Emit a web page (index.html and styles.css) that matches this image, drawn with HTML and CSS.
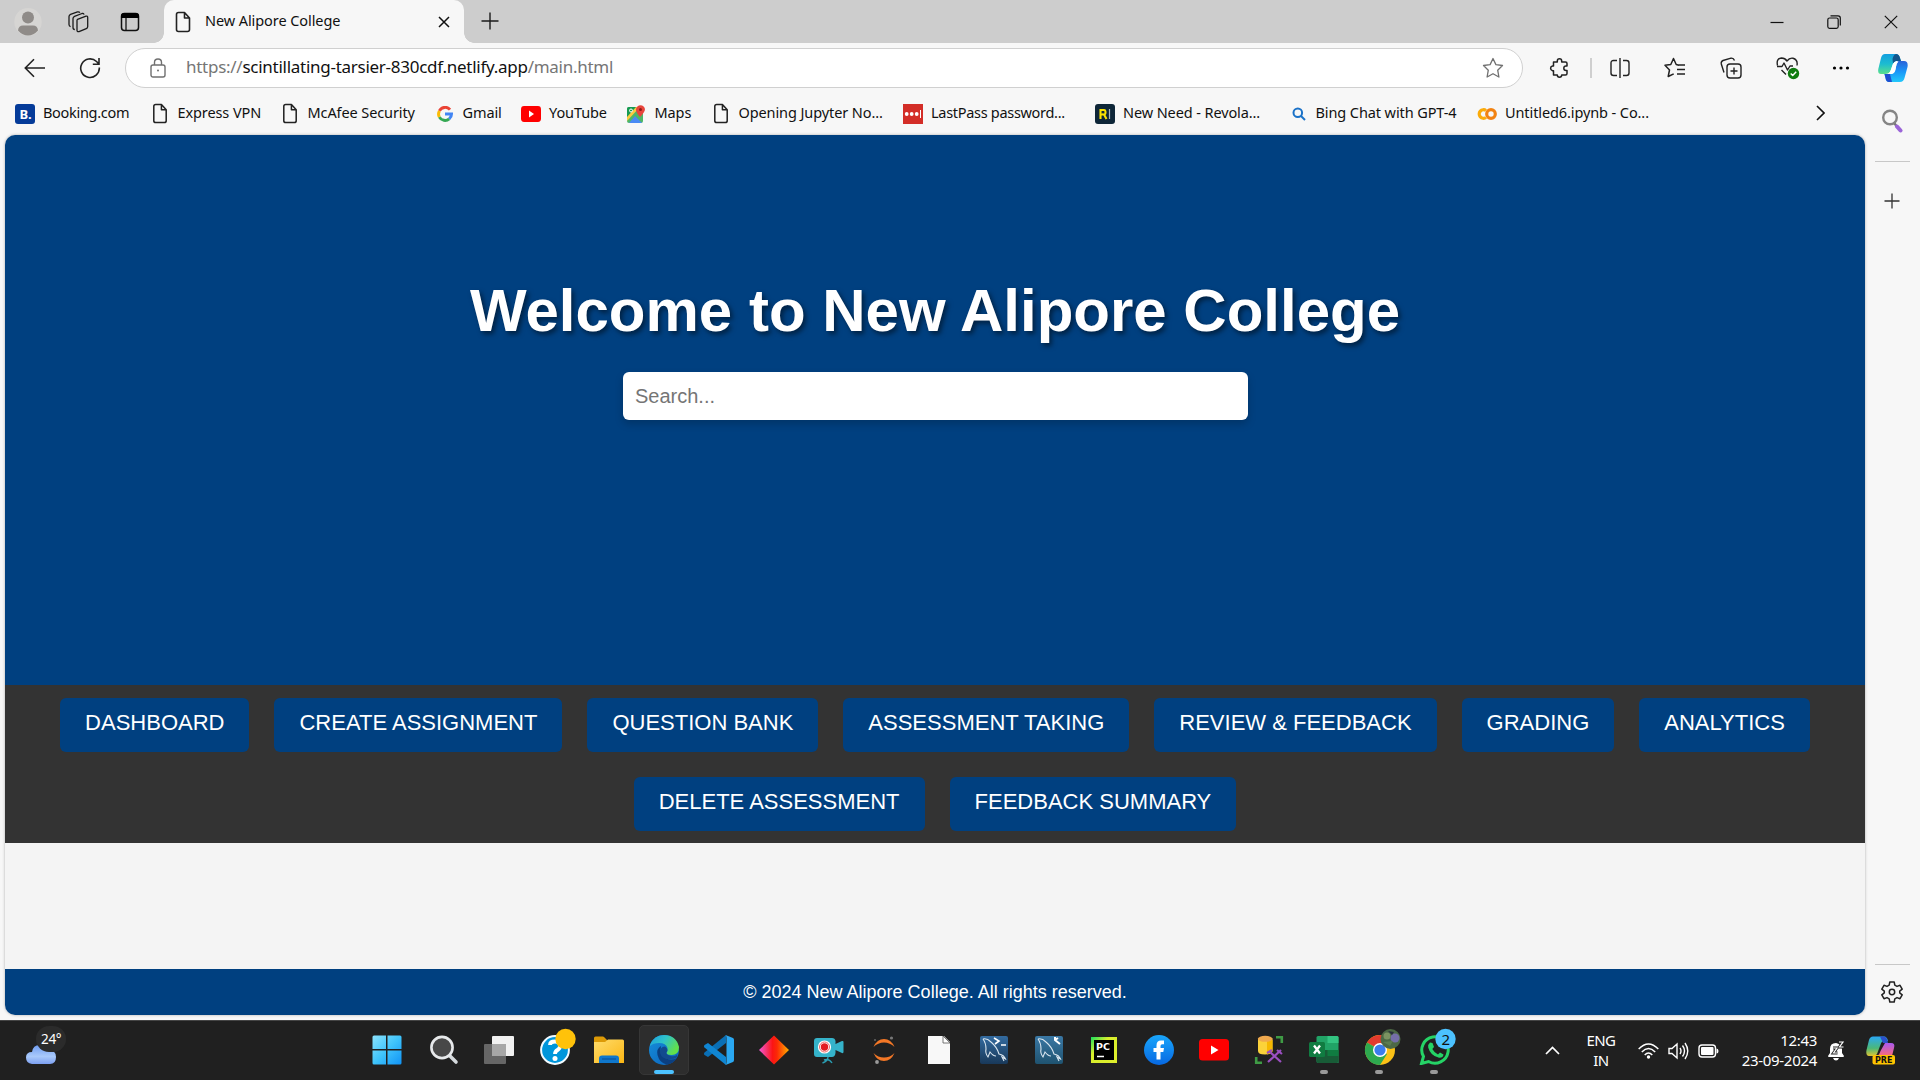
FILE: index.html
```html
<!DOCTYPE html>
<html lang="en">
<head>
<meta charset="utf-8">
<title>New Alipore College</title>
<link rel="stylesheet" href="styles.css">
</head>
<body>
<svg width="0" height="0" class="defs" aria-hidden="true">
  <defs>
    <symbol id="page" viewBox="0 0 16 22"><path d="M3.5 1.5H9.5L14.5 7V18.500Q14.500 20.500 12.500 20.500H3.500Q1.500 20.500 1.500 18.500V3.500Q1.500 1.500 3.500 1.500ZM9.500 1.500V7H14.500" fill="none" stroke="#222" stroke-width="1.600" stroke-linejoin="round"/></symbol>
    <linearGradient id="gWin" x1="0" y1="0" x2="1" y2="1"><stop offset="0" stop-color="#8be3fd"/><stop offset=".5" stop-color="#3fc4fb"/><stop offset="1" stop-color="#1193f5"/></linearGradient>
    <linearGradient id="gFold" x1="0" y1="0" x2="1" y2="1"><stop offset="0" stop-color="#ffdc6b"/><stop offset="1" stop-color="#fbb614"/></linearGradient>
    <linearGradient id="gEdgeTop" x1="0" y1="0" x2="1" y2=".5"><stop offset="0" stop-color="#1b9de0"/><stop offset=".5" stop-color="#2fc3c8"/><stop offset="1" stop-color="#62e04a"/></linearGradient>
    <linearGradient id="gEdgeMid" x1="0" y1="0" x2="1" y2="1"><stop offset="0" stop-color="#1690dc"/><stop offset="1" stop-color="#0b5fb8"/></linearGradient>
    <linearGradient id="gDia" x1="0" x2="1"><stop offset="0" stop-color="#f05ad8"/><stop offset=".45" stop-color="#fb1515"/><stop offset=".6" stop-color="#fb2a05"/><stop offset="1" stop-color="#ffb000"/></linearGradient>
    <linearGradient id="gSql" x1="0" y1="0" x2="0" y2="1"><stop offset="0" stop-color="#336ba0"/><stop offset="1" stop-color="#19395a"/></linearGradient>
    <linearGradient id="gSql2" x1="0" y1="0" x2="0" y2="1"><stop offset="0" stop-color="#3a78a5"/><stop offset="1" stop-color="#1f5370"/></linearGradient>
    <linearGradient id="gPc" x1="0" y1="0" x2="1" y2="1"><stop offset="0" stop-color="#16e05f"/><stop offset=".35" stop-color="#d7ee2c"/><stop offset="1" stop-color="#dfee2c"/></linearGradient>
    <linearGradient id="gFb" x1="0" y1="0" x2="0" y2="1"><stop offset="0" stop-color="#19a6fb"/><stop offset="1" stop-color="#0768e2"/></linearGradient>
    <linearGradient id="gCloud" x1="0" y1="0" x2="0" y2="1"><stop offset="0" stop-color="#6f9cf0"/><stop offset=".6" stop-color="#a9c9fb"/><stop offset="1" stop-color="#7c9ff0"/></linearGradient>
    <linearGradient id="gCopA" x1="0" y1="0" x2="0" y2="1"><stop offset="0" stop-color="#139fe0"/><stop offset=".5" stop-color="#1dbcd0"/><stop offset="1" stop-color="#5be08b"/></linearGradient>
    <linearGradient id="gCopB" x1="0" y1="0" x2="0" y2="1"><stop offset="0" stop-color="#2a62d8"/><stop offset=".5" stop-color="#1a96f8"/><stop offset="1" stop-color="#23c8fa"/></linearGradient>
    <linearGradient id="gPreA" x1="0" y1="0" x2="0" y2="1"><stop offset="0" stop-color="#2aa9f5"/><stop offset=".6" stop-color="#4bb878"/><stop offset="1" stop-color="#e0c432"/></linearGradient>
    <linearGradient id="gPreB" x1="0" y1="0" x2="0" y2="1"><stop offset="0" stop-color="#a95af0"/><stop offset="1" stop-color="#fb6b78"/></linearGradient>
  </defs>
</svg>

<header class="tabstrip">
  <div class="tabstrip-tools">
    <svg width="28" height="34" viewBox="0 0 28 34"><ellipse cx="14" cy="17" rx="13.700" ry="14" fill="#d6d5d3"/><circle cx="14" cy="12.500" r="6" fill="#8f8b88"/><path d="M4 25.500Q4.500 20.500 9 20.500H19Q23.500 20.500 24 25.500Q19.500 30.500 14 30.500T4 25.500Z" fill="#8f8b88"/></svg>
    <svg width="22" height="22" viewBox="0 0 22 22" fill="none" stroke="#1b1b1b" stroke-width="1.300" stroke-linejoin="round"><path d="M10.500 8.300L19 5.200Q20.700 4.800 20.700 6.500V15.500Q20.700 17 19.300 17.600L12 20.600Q10 21 10 19.200V9.500Q10 8.500 10.500 8.300Z"/><path d="M7.800 18.500Q6 18.500 6 16.500V7.500Q6 6 7.500 5.300L15 2.500Q16.800 2 17 3.700"/><path d="M3.600 15.600Q2 15.300 2 13.500V5.500Q2 4 3.500 3.300L10.500.9Q12.300.5 12.800 1.800"/></svg>
    <svg width="20" height="20" viewBox="0 0 20 20"><rect x="1.500" y="1.500" width="17" height="17" rx="3" fill="none" stroke="#111" stroke-width="1.500"/><path d="M1 6V4Q1 1 4 1H16Q19 1 19 4V6Z" fill="#000"/><path d="M6 6V18" stroke="#111" stroke-width="1.300"/></svg>
  </div>
  <div class="tab">
    <svg width="16" height="22"><use href="#page"/></svg>
    <span class="tab-title">New Alipore College</span>
    <svg width="12" height="12" viewBox="0 0 12 12"><path d="M1 1L11 11M11 1L1 11" stroke="#111" stroke-width="1.500"/></svg>
  </div>
  <svg class="newtab" width="18" height="18" viewBox="0 0 18 18"><path d="M9 .5V17.500M.5 9H17.500" stroke="#1b1b1b" stroke-width="1.400"/></svg>
  <div class="window-buttons">
    <svg width="14" height="14" viewBox="0 0 14 14"><path d="M.5 7.500H13.500" stroke="#111" stroke-width="1.200"/></svg>
    <svg width="14" height="14" viewBox="0 0 14 14" fill="none" stroke="#111" stroke-width="1.200"><rect x=".8" y="3" width="10.400" height="10.400" rx="1.800"/><path d="M3.500.8H11Q13.300.8 13.300 3V10.500"/></svg>
    <svg width="14" height="14" viewBox="0 0 14 14"><path d="M.8.8L13.200 13.200M13.200.8L.8 13.200" stroke="#111" stroke-width="1.200"/></svg>
  </div>
</header>

<div class="toolbar">
  <svg class="back" width="22" height="20" viewBox="0 0 22 20" fill="none" stroke="#222" stroke-width="1.600"><path d="M21 10H1.500M10 1.200L1.300 10L10 18.800"/></svg>
  <svg class="reload" width="22" height="22" viewBox="0 0 22 22" fill="none" stroke="#222" stroke-width="1.600"><path d="M20.300 10.500A9.300 9.300 0 1 1 17.500 4.500L20 7M20 1V7.300H13.800"/></svg>
  <div class="address">
    <svg width="16" height="20" viewBox="0 0 16 20" fill="none" stroke="#707070" stroke-width="1.400"><rect x="1" y="7" width="14" height="12" rx="2"/><path d="M4.500 7V4.500Q4.500 1 8 1T11.500 4.500V7"/><circle cx="8" cy="12.500" r="1" fill="#707070" stroke="none"/></svg>
    <span class="url">https://<b>scintillating-tarsier-830cdf.netlify.app</b>/main.html</span>
    <svg width="22" height="22" viewBox="0 0 22 22"><path d="M11 1.500L13.900 7.600L20.500 8.500L15.700 13.200L16.900 20L11 16.700L5.100 20L6.300 13.200L1.500 8.500L8.100 7.600Z" fill="none" stroke="#707070" stroke-width="1.300" stroke-linejoin="round"/></svg>
  </div>
  <div class="actions">
    <svg width="20" height="20" viewBox="0 0 20 20"><path d="M4.500 4H8.300V3A2.200 2.200 0 0 1 12.700 3V4H16.500Q18 4 18 5.500V8H17A2.200 2.200 0 0 0 17 12.400H18V15.500Q18 17 16.500 17H12.700A2.200 2.200 0 0 1 8.300 17H4.500V12.700H3.500A2.400 2.400 0 0 1 3.500 8H4.500Z" fill="none" stroke="#222" stroke-width="1.500" stroke-linejoin="round"/></svg>
    <i class="bar"></i>
    <svg width="20" height="20" viewBox="0 0 20 20" fill="none" stroke="#222" stroke-width="1.400"><path d="M7 2.500H3.500Q1 2.500 1 5V15Q1 17.500 3.500 17.500H7M13 2.500H16.500Q19 2.500 19 5V15Q19 17.500 16.500 17.500H13M10 0V20"/></svg>
    <svg width="22" height="22" viewBox="0 0 22 22" fill="none" stroke="#222" stroke-width="1.500" stroke-linejoin="round"><path d="M15 8.200L12.200 7.500L9.500 1.500L6.800 7.500L1 8.300L5.500 13L4.200 19.500L9.700 16.800M13 8H21M13 12.500H21M13 17H21"/></svg>
    <svg width="22" height="22" viewBox="0 0 22 22" fill="none" stroke="#222" stroke-width="1.400" stroke-linejoin="round"><rect x="7" y="7" width="14" height="14" rx="3"/><path d="M14 10.500V17.500M10.500 14H17.500M4 15.500L1.300 7Q.8 4.500 3 3.500L11 1.200Q13.500.8 14.500 3.500"/></svg>
    <svg width="24" height="24" viewBox="0 0 24 24" fill="none" stroke="#222" stroke-width="1.400" stroke-linejoin="round"><path d="M10 18.500L5.500 14M1.500 9.500Q0 2.500 5.500 2Q9 2 11 5Q13.500 1.500 17 2.200Q22 3.500 21 9.500M1 10.500H6L8 7L11.500 14L14 10H17"/><circle cx="17.500" cy="17.500" r="5.700" fill="#107c10" stroke="none"/><path d="M14.700 17.500L16.700 19.500L20.200 15.800" stroke="#fff"/></svg>
    <svg width="18" height="6" viewBox="0 0 18 6"><circle cx="2.500" cy="3" r="1.600"/><circle cx="9" cy="3" r="1.600"/><circle cx="15.500" cy="3" r="1.600"/></svg>
  </div>
  <svg class="copilot" width="30" height="28" viewBox="0 0 30 28"><path d="M7 0H18Q21 0 22 4L23 7H18Q15.500 7.500 14.500 11L12.500 17Q11 20 7 20H3Q-.5 20 .3 15L3 4Q4 0 7 0Z" fill="url(#gCopA)"/><path d="M14.500 5Q15.500.5 18 0Q21 0 22 4L23 7H18Q16 7.500 15 9.500Z" fill="#13558b"/><path d="M20 7H26Q30.500 7 29.500 13L26.500 24Q25.500 28 22 28H11Q8 28 7.500 24L6.500 20Q12 20 13.500 20L16 19Q17.500 17 18 13Q18.500 8 20 7Z" fill="url(#gCopB)"/><path d="M18 7.500H20.500Q18.800 9 18 13Q17 18.500 14 20H10Q12.500 18 13.200 15L15 10Q16 8 18 7.500Z" fill="#fff"/><path d="M6.500 20H12L14 28H11Q8 28 7.500 24Z" fill="#204fd0"/></svg>
</div>

<nav class="bookmarks">
  <a style="width:137px"><svg width="20" height="20" viewBox="0 0 20 20"><rect width="20" height="20" rx="3" fill="#053b99"/><text x="4.500" y="15" class="ico-b">B.</text></svg><span class="narrow">Booking.com</span></a>
  <a class="wide" style="width:130px"><svg width="16" height="21"><use href="#page"/></svg><span>Express VPN</span></a>
  <a class="wide" style="width:155px"><svg width="16" height="21"><use href="#page"/></svg><span>McAfee Security</span></a>
  <a class="wide" style="width:84px"><svg width="16" height="16" viewBox="0 0 16 16" fill="none" stroke-width="3"><path d="M13 3.600A6.400 6.400 0 0 0 2.400 4.900" stroke="#ea4335"/><path d="M2.400 4.900A6.400 6.400 0 0 0 2.400 11.100" stroke="#fbbc05"/><path d="M2.400 11.100A6.400 6.400 0 0 0 12.200 12.900" stroke="#34a853"/><path d="M12.200 12.900Q14.500 11 14.500 8H8" stroke="#4285f4"/></svg><span>Gmail</span></a>
  <a style="width:106px"><svg width="20" height="16" viewBox="0 0 20 14" preserveAspectRatio="none"><rect width="20" height="14" rx="3" fill="#f00"/><path d="M8 4V10L13 7Z" fill="#fff"/></svg><span>YouTube</span></a>
  <a class="wide" style="width:86px"><svg width="18" height="18" viewBox="0 0 18 18"><rect y="2" width="16" height="16" rx="2" fill="#4db667"/><path d="M0 16L13 2H7L0 9Z" fill="#fbcb3f"/><path d="M2 18L8 11L15 18Z" fill="#4a8af4"/><path d="M0 4Q0 2 2 2H9L0 12Z" fill="#179a52"/><path d="M13 12Q8.500 7 9 4Q10 .2 13.500.2T18 4Q18 7 13 12Z" fill="#e8453c"/><circle cx="13.500" cy="4.500" r="1.500" fill="#8e1b17"/><circle cx="4" cy="5.500" r="1.500" fill="none" stroke="#fff"/></svg><span>Maps</span></a>
  <a class="wide" style="width:190px"><svg width="16" height="21"><use href="#page"/></svg><span>Opening Jupyter No...</span></a>
  <a style="width:192px"><svg width="20" height="20" viewBox="0 0 20 20"><rect width="20" height="20" fill="#d32d27"/><g fill="#fff"><circle cx="3.700" cy="10" r="1.900"/><circle cx="8.700" cy="10" r="1.900"/><circle cx="13.700" cy="10" r="1.900"/><path d="M17 6H18V14H17Z"/></g></svg><span class="narrow">LastPass password...</span></a>
  <a style="width:197px"><svg width="20" height="20" viewBox="0 0 20 20"><rect width="20" height="20" rx="3" fill="#0e2638"/><path d="M5.500 15V6H9Q10.500 6 10.500 8.300T9 10.500L11.500 15M5.500 10.500H9" stroke="#fbe200" stroke-width="2.100" fill="none"/><path d="M14.500 5V15" stroke="#a8b4bd" stroke-width="1.200"/></svg><span>New Need - Revola...</span></a>
  <a class="wide" style="width:185px"><svg width="14" height="14" viewBox="0 0 14 14" fill="none" stroke="#1b72c8" stroke-width="2"><circle cx="5.800" cy="5.800" r="4.300"/><path d="M9 9L13 13"/></svg><span>Bing Chat with GPT-4</span></a>
  <a><svg width="20" height="14" viewBox="0 0 20 14" fill="none" stroke-width="3.200"><path d="M9 3.500A4.300 4.300 0 1 0 9 10.500" stroke="#fbab09"/><circle cx="14" cy="7" r="4.300" stroke="#f28211"/></svg><span>Untitled6.ipynb - Co...</span></a>
  <svg class="more" width="9" height="16" viewBox="0 0 9 16"><path d="M1 1L8 8L1 15" fill="none" stroke="#111" stroke-width="1.600"/></svg>
</nav>

<div class="workspace">
  <main class="site">
    <section class="hero">
      <h1>Welcome to New Alipore College</h1>
      <input class="search" type="text" placeholder="Search...">
    </section>
    <nav class="menu">
      <a>DASHBOARD</a><a>CREATE ASSIGNMENT</a><a>QUESTION BANK</a><a>ASSESSMENT TAKING</a><a>REVIEW &amp; FEEDBACK</a><a>GRADING</a><a>ANALYTICS</a><a>DELETE ASSESSMENT</a><a>FEEDBACK SUMMARY</a>
    </nav>
    <footer class="site-footer">© 2024 New Alipore College. All rights reserved.</footer>
  </main>
  <aside class="sidebar">
    <svg width="22" height="24" viewBox="0 0 22 24" fill="none"><circle cx="9" cy="8.500" r="6.800" stroke="#858585" stroke-width="2.400"/><path d="M13.500 14.500L15.500 17" stroke="#777" stroke-width="2.400"/><path d="M16 17.500L19.500 21.500" stroke="#9b65d8" stroke-width="4" stroke-linecap="round"/></svg>
    <hr>
    <svg width="16" height="16" viewBox="0 0 16 16"><path d="M8 .5V15.500M.5 8H15.500" stroke="#333" stroke-width="1.300"/></svg>
    <hr class="low">
    <svg class="gear" width="22" height="22" viewBox="0 0 22 22" fill="none" stroke="#222" stroke-width="1.500" stroke-linejoin="round"><path d="M8.800 1H13.200L13.800 4.200L16 5.400L19 4.300L21.200 8.200L18.700 10.200V11.800L21.200 13.800L19 17.700L16 16.600L13.800 17.800L13.200 21H8.800L8.200 17.800L6 16.600L3 17.700L.8 13.800L3.300 11.800V10.200L.8 8.200L3 4.300L6 5.400L8.200 4.200Z"/><circle cx="11" cy="11" r="2.700"/></svg>
  </aside>
</div>

<footer class="taskbar">
  <div class="weather">
    <svg width="34" height="28" viewBox="0 0 34 28"><circle cx="24" cy="8" r="7" fill="#e8791e"/><path d="M7 27Q1 26 1 20.500T7 15Q8 8 14.500 8T23 13Q31 13 31 20T25 27Z" fill="url(#gCloud)"/></svg>
    <span>24°</span>
  </div>
  <div class="apps">
    <div class="app start"><svg width="30" height="30" viewBox="0 0 30 30" fill="url(#gWin)"><path d="M2 .5H14V14H.5V2Q.5.5 2 .5ZM15.500.5H28Q29.500.5 29.500 2V14H15.500ZM.5 15.500H14V29.500H2Q.5 29.500.5 28ZM15.500 15.500H29.500V28Q29.500 29.500 28 29.500H15.500Z"/></svg></div>
    <div class="app"><svg width="30" height="30" viewBox="0 0 30 30"><path d="M20 20L27 27" stroke="#d5d9dd" stroke-width="3.600" stroke-linecap="round"/><circle cx="13" cy="12.500" r="10.600" fill="#484848" stroke="#e7e9eb" stroke-width="2.600"/></svg></div>
    <div class="app"><svg width="30" height="30" viewBox="0 0 30 30"><rect x="8" y="1" width="22" height="20" rx="1" fill="#f1f1f1"/><rect y="9" width="22" height="20" rx="1" fill="#666"/><path d="M8 9H22V21H8Z" fill="#a7a7a7"/></svg></div>
    <div class="app"><svg width="38" height="38" viewBox="0 0 38 38"><circle cx="17" cy="23" r="13.900" fill="#0096db" stroke="#f3fbff" stroke-width="2"/><path d="M12 18Q12 14.500 17 14.500T22 19Q22 21.500 19.500 23T17 27" stroke="#fff" stroke-width="3.800" fill="none"/><circle cx="17" cy="31.500" r="2.500" fill="#fff"/><circle cx="27.500" cy="12" r="10.200" fill="#ffc20a"/></svg></div>
    <div class="app"><svg width="30" height="30" viewBox="0 0 30 30"><path d="M0 3Q0 1.500 1.500 1.500H9Q10 1.500 11 3L13 5V9H0Z" fill="#dd9a06"/><path d="M0 7H11L14 4.500H28.500Q30 4.500 30 6V28H0Z" fill="url(#gFold)"/><path d="M5 28V23.500Q5 20.500 8 20.500H22Q25 20.500 25 23.500V28Z" fill="#0f77cc"/><path d="M8 24H22" stroke="#0a4c93"/></svg></div>
    <div class="app active"><svg width="30" height="30" viewBox="0 0 30 30"><circle cx="15" cy="15" r="15" fill="url(#gEdgeMid)"/><path d="M1 10Q5 0 15 0Q27 0 30 12Q30 20 22.500 20Q17 20 17.500 17.500Q19 16 18.500 13Q17 8 10 8Q4 8 1 11Z" fill="url(#gEdgeTop)"/><path d="M12 11Q7 14 8.500 20Q10.500 28 18 29.700Q24.500 28.500 28 23Q22 26 16.500 23Q10 19 12 11Z" fill="#0b3f80"/><path d="M16 11.500Q10.500 12 11 18Q13 25 22 24Q25 24 27.500 22.500Q29 21.500 28 20Q25 22 21 20.700Q17 19.500 17.500 17.500Q20 14.500 16 11.500Z" fill="#124a8e"/></svg><i class="mark on"></i></div>
    <div class="app"><svg width="30" height="30" viewBox="0 0 30 30"><path d="M22 0L22 8L4 22L.5 20Q-.5 18.500.5 17.500Z" fill="#0a6fb5"/><path d="M22 30L22 22L4 8L.5 10Q-.5 11.500.5 12.500Z" fill="#1086d3"/><path d="M21.500 0L29 3Q30 3.500 30 5V25Q30 26.500 29 27L21.500 30Q22.500 29 22.500 27V3Q22.500 1 21.500 0Z" fill="#2aa8f2"/></svg></div>
    <div class="app"><svg width="30" height="30" viewBox="0 0 30 30"><path d="M15 .5L30 15L15 29.500L0 15Z" fill="url(#gDia)"/></svg></div>
    <div class="app"><svg width="30" height="30" viewBox="0 0 30 30"><path d="M3 3H18Q21 3 21.500 6V9L28 6Q29.500 5.500 29.500 7V17Q29.500 18.500 28 18L21.500 15V18Q21 22 18 22H3Q0 22 0 19V6Q0 3 3 3Z" fill="#35b3ca"/><circle cx="10.500" cy="12" r="6.600" fill="#fff"/><circle cx="10.500" cy="12" r="5" fill="none" stroke="#e66"/><circle cx="10.500" cy="12" r="3.700" fill="#e31b20"/><path d="M14 22Q14 26 8.500 28M10 25Q15 23 18 28" stroke="#2a9db2" stroke-width="1.400" fill="none"/></svg></div>
    <div class="app"><svg width="30" height="30" viewBox="0 0 30 30"><path d="M4.500 12Q8 4 15 4T25.500 12Q21 7.500 15 7.500T4.500 12ZM4.500 18Q8 26 15 26T25.500 18Q21 22.500 15 22.500T4.500 18Z" fill="#f37726"/><circle cx="22.500" cy="3" r="1.600" fill="#777"/><circle cx="8" cy="27" r="1.900" fill="#9b9b9b"/><circle cx="6" cy="5" r="1" fill="#666"/></svg></div>
    <div class="app"><svg width="30" height="30" viewBox="0 0 30 30"><path d="M4 1H20L26 7V29H4Z" fill="#f8f8f8"/><path d="M19 1V8H26Z" fill="#fff" stroke="#555" stroke-width=".8"/></svg></div>
    <div class="app"><svg width="30" height="30" viewBox="0 0 30 30"><rect x="1" y="1" width="28" height="28" rx="2" fill="url(#gSql)"/><path d="M4 4Q8 3 12 7Q18 12 20 19Q25 20 26.500 24L23 22L25 26M4 4Q7 8 7 14Q6 18 9 22L11 17Q14 21 17 21" stroke="#dbe7f0" stroke-width="1.100" fill="none"/><path d="M15 3L20 6L16 9M22 10H27" stroke="#fff" stroke-width="1.600" fill="none"/></svg></div>
    <div class="app"><svg width="30" height="30" viewBox="0 0 30 30"><rect x="1" y="1" width="28" height="28" rx="2" fill="url(#gSql2)"/><path d="M4 4Q8 3 12 7Q18 12 20 19Q25 20 26.500 24L23 22L25 26M4 4Q7 8 7 14Q6 18 9 22L11 17Q14 21 17 21" stroke="#dbe7f0" stroke-width="1.100" fill="none"/><path d="M21 2V5L26 9M21 5L24 3" stroke="#fff" stroke-width="2" fill="none"/></svg></div>
    <div class="app"><svg width="30" height="30" viewBox="0 0 30 30"><rect x="2" y="2" width="26" height="26" fill="url(#gPc)"/><rect x="5" y="5" width="20" height="20" fill="#000"/><text x="7" y="15" class="ico-pc">PC</text><path d="M8 21.500H15" stroke="#fff" stroke-width="1.500"/></svg></div>
    <div class="app"><svg width="30" height="30" viewBox="0 0 30 30"><circle cx="15" cy="15" r="15" fill="url(#gFb)"/><path d="M12.500 24.500V17H9.500V13H12.500V10.500Q12.500 5.500 17 5.500H20V9.300H18.200Q16.500 9.300 16.500 11V13H20L19.300 17H16.500V24.500Z" fill="#fff"/></svg></div>
    <div class="app"><svg width="30" height="22" viewBox="0 0 30 22"><rect width="30" height="21.500" rx="3.500" fill="#f00"/><path d="M12 6.500V15.500L19.500 11Z" fill="#fff"/></svg></div>
    <div class="app"><svg width="30" height="30" viewBox="0 0 30 30"><path d="M4 3.500V16Q4 19.500 11 19.500T18.500 16V3.500Z" fill="#fbd23a"/><path d="M13 5H18.500V16Q18 18.500 13 19.500Z" fill="#f6b700"/><ellipse cx="11.200" cy="3.800" rx="7.300" ry="3" fill="#efa94e"/><path d="M22 2.200H27.800V8M8 27.800H2.200V22" stroke="#3f9b45" stroke-width="2.600" fill="none"/><path d="M15 16L27 27M27 15L14 27M23 15L28 19M13 18L18 15" stroke="#9a4fc0" stroke-width="2.200"/></svg></div>
    <div class="app"><svg width="30" height="30" viewBox="0 0 30 30"><path d="M9 1H28Q29.500 1 29.500 2.500V28H9Q7.500 28 7.500 26V2.500Q7.500 1 9 1Z" fill="#21a366"/><path d="M18.500 1H28Q29.500 1 29.500 2.500V8H18.500Z" fill="#33c481"/><path d="M7.500 15H29.500V26Q29.500 28 28 28H9Q7.500 28 7.500 26Z" fill="#185c37"/><path d="M18.500 15H29.500V21H18.500Z" fill="#107c41"/><rect y="7" width="16" height="15" rx="1.500" fill="#107c41"/><path d="M5 10.500L11 18.500M11 10.500L5 18.500" stroke="#fff" stroke-width="2.300"/></svg><i class="mark"></i></div>
    <div class="app"><svg width="38" height="38" viewBox="0 0 38 38"><circle cx="17" cy="23" r="15" fill="#fbc116"/><path d="M17 23L4 15.500A15 15 0 0 1 30 15.500Z" fill="#e33b2e"/><path d="M17 23L4 15.500A15 15 0 0 0 17 38L24 27Z" fill="#2da94f"/><circle cx="17" cy="23" r="7" fill="#fff"/><circle cx="17" cy="23" r="5.600" fill="#3b7ded"/><circle cx="27.500" cy="12" r="10" fill="#4c6845"/><circle cx="32" cy="11" r="4.500" fill="#746ea8"/><circle cx="24" cy="9" r="3.500" fill="#7b9361"/><path d="M20 15L27 19L30 14" fill="#5d7d50"/><path d="M25 4L31 5L29 8Z" fill="#272f3c"/></svg><i class="mark"></i></div>
    <div class="app"><svg width="38" height="38" viewBox="0 0 38 38"><path d="M3.500 36.500L5.500 29.500A13.200 13.200 0 1 1 10.500 34.500Z" fill="none" stroke="#25d366" stroke-width="3"/><path d="M12 15.500L14.500 16L16 20L14.300 22Q16.500 26 20 27.500L22 25.500L25.500 27.500Q25 31 21 30.700Q12.500 29 10.200 20.500Q10 17 12 15.500Z" fill="#25d366"/><circle cx="27.500" cy="12" r="10.200" fill="#4cc2ff"/><text x="23.500" y="17.500" class="ico-2">2</text></svg><i class="mark"></i></div>
  </div>
  <div class="tray">
    <svg class="chev" width="15" height="9" viewBox="0 0 15 9"><path d="M1 8L7.500 1.500L14 8" stroke="#fff" stroke-width="1.700" fill="none"/></svg>
    <div class="lang"><span>ENG</span><span>IN</span></div>
    <svg class="wifi" width="21" height="16" viewBox="0 0 21 16" fill="none" stroke="#fff" stroke-width="1.500"><path d="M.7 6Q10.500-4 20.300 6M3.800 9Q10.500 2.200 17.200 9M6.700 12Q10.500 8 14.300 12"/><circle cx="10.500" cy="14" r="1.700" fill="#fff" stroke="none"/></svg>
    <svg class="vol" width="21" height="18" viewBox="0 0 21 18" fill="none" stroke="#fff" stroke-width="1.400"><path d="M1 6.500H4L9 2V16L4 11.500H1ZM12 6Q14 9 12 12M14.500 3.500Q18.500 9 14.500 14.500M17 1Q22.500 9 17 17"/></svg>
    <svg class="bat" width="21" height="14" viewBox="0 0 21 14"><rect x="1" y="1" width="16.500" height="12" rx="3" fill="none" stroke="#fff" stroke-width="1.400"/><rect x="3" y="3" width="12.500" height="8" rx="1" fill="#fff"/><path d="M18.500 4.500Q20.500 4.500 20.500 7T18.500 9.500Z" fill="#fff"/></svg>
    <div class="clock"><span>12:43</span><span>23-09-2024</span></div>
    <svg class="bell" width="18" height="20" viewBox="0 0 18 20"><path d="M1 15L3 12V8Q3 2 9 2Q14 3 15 8V12L17 15Q17 16 16 16H2Q1 16 1 15ZM6 17H12Q11 19.500 9 19.500T6 17Z" fill="#fff"/><path d="M6 7H10L6.500 12H10.500M12 1H16L12.500 6H16.500" stroke="#222" stroke-width="3" fill="none"/><path d="M6 7H10L6.500 12H10.500M12 1H16L12.500 6H16.500" stroke="#fff" stroke-width="1.200" fill="none"/></svg>
    <svg class="pre" width="30" height="29" viewBox="0 0 30 29"><path d="M7 .5H18Q21 .5 22 5H17Q15 6 14 10L11 18Q10 20 7 20H3Q-.5 20 .5 14L3 4Q4 .5 7 .5Z" fill="url(#gPreA)"/><path d="M14 .5H18Q21 .5 22 7H17Z" fill="#2b51cc"/><path d="M19 7H25Q29.500 7 28 12L26 20H10Q13 20 14.500 15Z" fill="url(#gPreB)"/><rect x="6.500" y="19" width="22.500" height="9.500" rx="2" fill="#ffc400"/><text x="9" y="26.800" class="ico-pre">PRE</text></svg>
  </div>
</footer>
</body>
</html>
```
FILE: styles.css
```css
* { box-sizing: border-box; }
html, body { height: 100%; }
body {
  margin: 0;
  display: flex;
  flex-direction: column;
  overflow: hidden;
  background: #f7f7f7;
  color: #111;
  font-family: "Noto Sans", sans-serif;
}
svg { display: block; flex: none; }
.defs { position: absolute; }

/* tab strip */
.tabstrip { display: flex; height: 43px; background: #cdcdcd; align-items: center; flex: none; }
.tabstrip-tools { display: flex; align-items: center; width: 164px; padding-left: 14px; gap: 25px; }
.tabstrip-tools svg:last-child { margin-left: 6px; }
.tab {
  position: relative;
  display: flex;
  align-items: center;
  width: 300px;
  height: 43px;
  padding: 0 14px 0 11px;
  background: #f7f7f7;
  border-radius: 10px 10px 0 0;
}
.tab::before, .tab::after {
  content: "";
  position: absolute;
  bottom: 0;
  width: 10px;
  height: 10px;
}
.tab::before { left: -10px; background: radial-gradient(circle at 0 0, transparent 9.500px, #f7f7f7 10px); }
.tab::after { right: -10px; background: radial-gradient(circle at 100% 0, transparent 9.500px, #f7f7f7 10px); }
.tab-title { flex: 1; margin-left: 14px; padding-bottom: 3px; font-size: 14.500px; letter-spacing: -.08px; white-space: nowrap; }
.newtab { margin-left: 17px; margin-top: -2px; }
.window-buttons { display: flex; gap: 43px; margin-left: auto; padding-right: 22px; }

/* toolbar */
.toolbar { display: flex; align-items: center; height: 49px; flex: none; }
.back { margin-left: 24px; }
.reload { margin-left: 33px; }
.address {
  display: flex;
  align-items: center;
  width: 1398px;
  height: 40px;
  margin-left: 24px;
  padding: 0 18px 0 24px;
  background: #fff;
  border: 1px solid #d0d0d0;
  border-radius: 20px;
}
.url { flex: 1; margin-left: 20px; padding-bottom: 2px; font-size: 17px; letter-spacing: -.27px; color: #767676; white-space: nowrap; }
.url b { font-weight: 400; color: #111; }
.actions { display: flex; align-items: center; width: 326px; padding-left: 26px; gap: 34px; flex: none; }
.bar { flex: none; width: 2px; height: 20px; background: #cfcfcf; margin: 0 -16px 0 -13px; }
.actions svg:last-child { margin-left: -2px; }
.copilot { margin-left: 29px; }

/* bookmarks */
.bookmarks { display: flex; align-items: center; height: 43px; padding: 0 0 0 15px; flex: none; font-size: 14.500px; letter-spacing: -.1px; }
.bookmarks a { display: flex; align-items: center; gap: 8px; white-space: nowrap; }
.bookmarks a.wide { gap: 9.500px; }
.bookmarks span { padding-bottom: 3px; }
.bookmarks .narrow { letter-spacing: -.3px; }
.more { margin-left: auto; margin-right: 95px; margin-top: -1px; }
.ico-b { font: 700 13px "Noto Sans", sans-serif; fill: #fff; letter-spacing: 0; }

/* workspace */
.workspace { display: flex; height: 885px; padding-left: 5px; flex: none; }
.site {
  display: flex;
  flex-direction: column;
  width: 1860px;
  height: 880px;
  overflow: hidden;
  background: #f4f4f4;
  border-radius: 10px;
  box-shadow: 0 0 3px rgba(0, 0, 0, .3);
  font-family: "Liberation Sans", Arial, sans-serif;
}
.hero { display: flex; flex-direction: column; align-items: center; height: 550px; padding-top: 141px; background: #004080; }
.hero h1 { margin: 0; font-size: 60px; line-height: 69px; color: #fff; text-shadow: 2.500px 2.500px 5px rgba(0, 0, 0, .5); }
.search {
  width: 625px;
  height: 48px;
  margin-top: 27px;
  padding: 0 12.500px;
  border: 0;
  border-radius: 6px;
  background: #fff;
  box-shadow: 0 4px 8px rgba(0, 0, 0, .2);
  font: 20px "Liberation Sans", Arial, sans-serif;
}
.search::placeholder { color: #757575; }
.menu { display: flex; flex-wrap: wrap; justify-content: center; align-content: flex-start; gap: 25px; height: 158px; padding: 12.500px 20px; background: #333; }
.menu a { height: 54px; padding: 12px 25px 0; border-radius: 6px; background: #004080; color: #fff; font-size: 22px; line-height: 26px; white-space: nowrap; }
.site-footer { height: 46px; margin-top: auto; background: #004080; color: #fff; font-size: 18px; line-height: 46px; text-align: center; }

/* side pane */
.sidebar { display: flex; flex-direction: column; align-items: center; width: 54px; margin-top: -26px; }
.sidebar hr { width: 35px; height: 1px; margin: 28px 0 31px; border: 0; background: #c8c8c8; }
.sidebar hr.low { margin: auto 0 16px; }
.gear { margin-bottom: 17px; }

/* taskbar */
.taskbar { display: flex; height: 60px; background: #202020; border-top: 1px solid #454545; color: #fff; flex: none; }
.weather { position: relative; width: 360px; padding: 16px 0 0 25px; }
.weather span { position: absolute; left: 36px; top: 5px; width: 30px; height: 26px; padding-left: 5px; border-radius: 13px; background: #2b2b2b; font-size: 13.500px; line-height: 26px; letter-spacing: -.3px; }
.apps { display: flex; gap: 5px; padding: 4px 0 0 2px; }
.app { position: relative; display: flex; align-items: center; justify-content: center; width: 50px; height: 50px; border-radius: 5px; }
.app.start { margin-right: 2px; }
.app.active { background: #2d2d2d; border: 1px solid #363636; }
.app svg[width="38"] { margin: -8px -2px 0 4px; }
.mark { position: absolute; bottom: 1px; left: 21px; width: 8px; height: 4px; border-radius: 2px; background: #9a9a9a; }
.mark.on { left: 14px; bottom: 0; width: 20px; background: #4cc2ff; }
.ico-pc { font: 700 9.500px "DejaVu Sans", sans-serif; fill: #fff; }
.ico-2 { font: 15px "Noto Sans", sans-serif; fill: #111; }
.ico-pre { font: 800 8px "DejaVu Sans", sans-serif; fill: #111; }
.tray { display: flex; align-items: center; margin-left: auto; padding-right: 24px; font-size: 15px; line-height: 20px; }
.lang, .clock { display: flex; flex-direction: column; flex: none; padding-bottom: 2px; white-space: nowrap; }
.lang { align-items: center; width: 32px; margin-left: 25px; letter-spacing: -.6px; }
.wifi { margin-left: 21px; }
.vol { margin-left: 9px; }
.bat { margin-left: 9px; }
.clock { align-items: flex-end; width: 82px; margin-left: 16px; letter-spacing: -.3px; }
.bell { margin-left: 10px; }
.pre { margin-left: 21px; }
```
